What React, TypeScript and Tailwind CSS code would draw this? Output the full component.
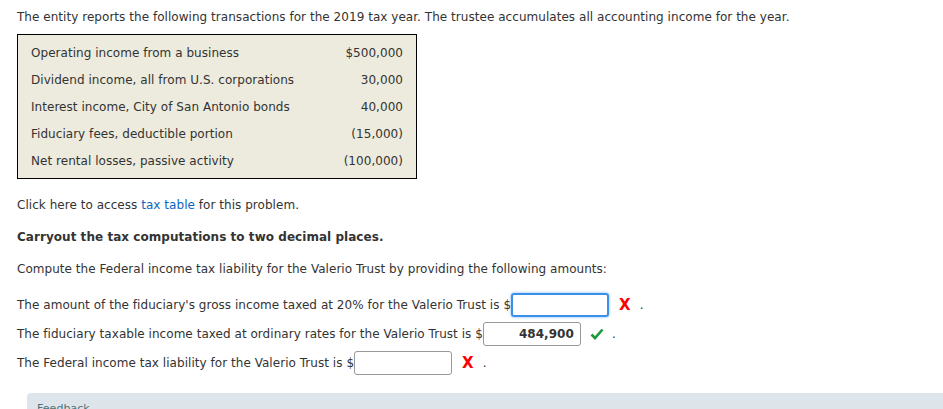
import React from 'react'

const rows: [string, string][] = [
  ['Operating income from a business', '$500,000'],
  ['Dividend income, all from U.S. corporations', '30,000'],
  ['Interest income, City of San Antonio bonds', '40,000'],
  ['Fiduciary fees, deductible portion', '(15,000)'],
  ['Net rental losses, passive activity', '(100,000)'],
]

const Cross = () => (
  <span className="ml-[10px] text-[15px] font-bold leading-none text-[#f00]">X</span>
)

const Check = () => (
  <svg width="14" height="12" viewBox="0 0 14 12" className="ml-[9px]">
    <path d="M1.5 6.5 5 10 12.5 1.5" fill="none" stroke="#1a9a3a" strokeWidth="2.6" />
  </svg>
)

export default function App() {
  return (
    <div className="h-[409px] overflow-hidden bg-white font-['DejaVu_Sans',Verdana,sans-serif] text-[12px] tracking-[0.04px] text-[#333]">
      <div className="px-[17px] pt-[9px]">
        <p className="leading-[16px]">
          The entity reports the following transactions for the 2019 tax year. The trustee accumulates all accounting income for the year.
        </p>

        <div className="mt-[9px] w-[400px] border border-black bg-[#ecebdd] px-[13px] py-[4px]">
          {rows.map(([label, amt]) => (
            <div key={label} className="flex h-[27px] items-center justify-between">
              <span>{label}</span>
              <span>{amt}</span>
            </div>
          ))}
        </div>

        <p className="mt-[18px] leading-[16px]">
          Click here to access <span className="text-[#0b66c3]">tax table</span> for this problem.
        </p>
        <p className="mt-[16px] font-bold leading-[16px]">Carryout the tax computations to two decimal places.</p>
        <p className="mt-[16px] leading-[16px]">
          Compute the Federal income tax liability for the Valerio Trust by providing the following amounts:
        </p>

        <div className="mt-[16px] flex flex-col gap-[5px]">
          <div className="flex h-[24px] items-center">
            <span>The amount of the fiduciary's gross income taxed at 20% for the Valerio Trust is $</span>
            <div className="h-[24px] w-[98px] rounded-[3px] border-2 border-[#3b8fe8] shadow-[0_0_3px_#7ab4f5]" />
            <Cross />
            <span className="ml-[9px]">.</span>
          </div>
          <div className="flex h-[24px] items-center">
            <span>The fiduciary taxable income taxed at ordinary rates for the Valerio Trust is $</span>
            <div className="flex h-[24px] w-[98px] items-center justify-end rounded-[3px] border border-[#999] pr-[6px] font-bold">
              484,900
            </div>
            <Check />
            <span className="ml-[8px]">.</span>
          </div>
          <div className="flex h-[24px] items-center">
            <span>The Federal income tax liability for the Valerio Trust is $</span>
            <div className="h-[24px] w-[98px] rounded-[3px] border border-[#999]" />
            <Cross />
            <span className="ml-[9px]">.</span>
          </div>
        </div>
      </div>

      <div className="ml-[27px] mt-[18px] h-[40px] rounded-tl-[4px] bg-[#dde5ea] px-[10px] pt-[8px] text-[11px] leading-[16px] text-[#4d7275]">
        Feedback
      </div>
    </div>
  )
}
